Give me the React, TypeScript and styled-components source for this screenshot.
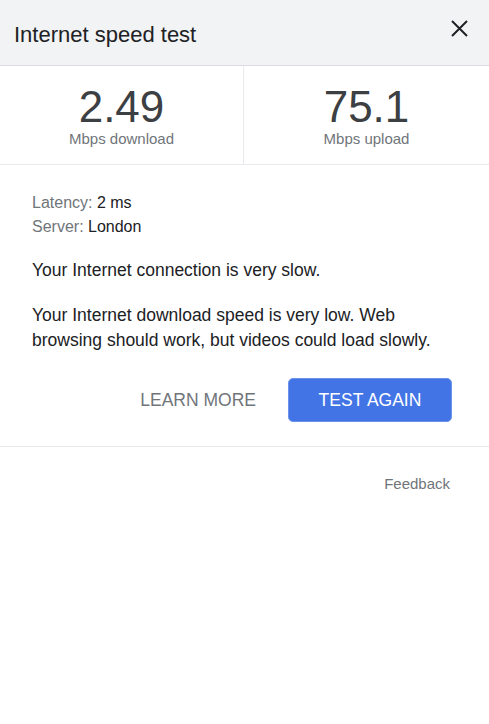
import React from "react"
import styled, { createGlobalStyle } from "styled-components"

const GlobalStyle = createGlobalStyle`
  html, body {
    margin: 0;
    padding: 0;
    background: #ffffff;
    font-family: "Liberation Sans", Arial, sans-serif;
  }
`

const Panel = styled.div`
  width: 489px;
  min-height: 724px;
  background: #ffffff;
`

const Header = styled.div`
  height: 65px;
  display: flex;
  align-items: center;
  justify-content: space-between;
  padding: 0 20px 0 14px;
  background: #f1f3f4;
  border-bottom: 1px solid #dadce0;
`

const Title = styled.div`
  font-size: 22px;
  color: #202124;
  padding-top: 4px;
`

const CloseButton = styled.button`
  border: none;
  background: none;
  padding: 0;
  width: 19px;
  height: 19px;
  cursor: pointer;
  margin-top: -8px;
`

const Stats = styled.div`
  display: grid;
  grid-template-columns: 244px 1fr;
  height: 98px;
  border-bottom: 1px solid #e8eaed;
`

const Stat = styled.div<{ $divider?: boolean }>`
  display: flex;
  flex-direction: column;
  align-items: center;
  padding-top: 19px;
  border-right: ${(p) => (p.$divider ? "1px solid #e8eaed" : "none")};
`

const Value = styled.div`
  font-size: 44px;
  line-height: 44px;
  color: #3c4043;
`

const Unit = styled.div`
  font-size: 15px;
  line-height: 18px;
  color: #70757a;
  margin-top: 1px;
`

const Body = styled.div`
  padding: 26px 32px 0;
  font-size: 16px;
  line-height: 24px;
  color: #202124;
`

const Meta = styled.div`
  margin-bottom: 19px;
`

const Label = styled.span`
  color: #70757a;
`

const Message = styled.p`
  margin: 0 0 20px;
  font-size: 17.5px;
  line-height: 25px;
`

const Actions = styled.div`
  display: flex;
  justify-content: flex-end;
  align-items: center;
  gap: 32px;
  padding: 5px 5px 24px 0;
`

const TextButton = styled.button`
  border: none;
  background: none;
  padding: 0;
  font-family: inherit;
  font-size: 17.5px;
  color: #70757a;
  cursor: pointer;
`

const PrimaryButton = styled.button`
  width: 164px;
  height: 44px;
  border: 1px solid #6c93ec;
  border-radius: 5px;
  background: #4374e6;
  color: #ffffff;
  font-family: inherit;
  font-size: 17.5px;
  cursor: pointer;
`

const Footer = styled.div`
  border-top: 1px solid #e8eaed;
  display: flex;
  justify-content: flex-end;
  padding: 28px 39px 0 0;
`

const FeedbackLink = styled.a`
  font-size: 15px;
  color: #70757a;
  text-decoration: none;
`

const CloseIcon = () => (
  <svg width="19" height="19" viewBox="0 0 19 19">
    <path d="M2 2 L17 17 M17 2 L2 17" stroke="#202124" strokeWidth="2" />
  </svg>
)

export default function App() {
  return (
    <Panel>
      <GlobalStyle />
      <Header>
        <Title>Internet speed test</Title>
        <CloseButton aria-label="Close">
          <CloseIcon />
        </CloseButton>
      </Header>
      <Stats>
        <Stat $divider>
          <Value>2.49</Value>
          <Unit>Mbps download</Unit>
        </Stat>
        <Stat>
          <Value>75.1</Value>
          <Unit>Mbps upload</Unit>
        </Stat>
      </Stats>
      <Body>
        <Meta>
          <div>
            <Label>Latency:</Label> 2 ms
          </div>
          <div>
            <Label>Server:</Label> London
          </div>
        </Meta>
        <Message>Your Internet connection is very slow.</Message>
        <Message>
          Your Internet download speed is very low. Web browsing should work, but videos could load slowly.
        </Message>
        <Actions>
          <TextButton>LEARN MORE</TextButton>
          <PrimaryButton>TEST AGAIN</PrimaryButton>
        </Actions>
      </Body>
      <Footer>
        <FeedbackLink href="#">Feedback</FeedbackLink>
      </Footer>
    </Panel>
  )
}
